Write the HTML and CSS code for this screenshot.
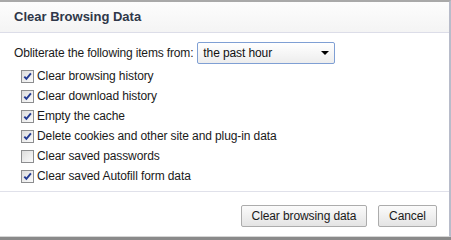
FILE: index.html
```html
<!DOCTYPE html>
<html lang="en">
<head>
<meta charset="utf-8">
<title>Clear Browsing Data</title>
<link rel="stylesheet" href="styles.css">
</head>
<body>
<div class="dialog">
  <div class="header">
    <h1 class="title">Clear Browsing Data</h1>
  </div>
  <div class="content">
    <div class="period-row">
      <span class="period-label">Obliterate the following items from:</span>
      <div class="select">
        <span class="select-value">the past hour</span>
        <span class="select-arrow"></span>
      </div>
    </div>
    <ul class="options">
      <li class="option"><span class="checkbox checked"><svg viewBox="0 0 11 11" width="11" height="11"><path d="M2.3 5.6 L4.4 7.9 L8.9 2.4" fill="none" stroke="#223a92" stroke-width="1.9"/></svg></span><span class="option-label">Clear browsing history</span></li>
      <li class="option"><span class="checkbox checked"><svg viewBox="0 0 11 11" width="11" height="11"><path d="M2.3 5.6 L4.4 7.9 L8.9 2.4" fill="none" stroke="#223a92" stroke-width="1.9"/></svg></span><span class="option-label">Clear download history</span></li>
      <li class="option"><span class="checkbox checked"><svg viewBox="0 0 11 11" width="11" height="11"><path d="M2.3 5.6 L4.4 7.9 L8.9 2.4" fill="none" stroke="#223a92" stroke-width="1.9"/></svg></span><span class="option-label">Empty the cache</span></li>
      <li class="option"><span class="checkbox checked"><svg viewBox="0 0 11 11" width="11" height="11"><path d="M2.3 5.6 L4.4 7.9 L8.9 2.4" fill="none" stroke="#223a92" stroke-width="1.9"/></svg></span><span class="option-label">Delete cookies and other site and plug-in data</span></li>
      <li class="option"><span class="checkbox"></span><span class="option-label">Clear saved passwords</span></li>
      <li class="option"><span class="checkbox checked"><svg viewBox="0 0 11 11" width="11" height="11"><path d="M2.3 5.6 L4.4 7.9 L8.9 2.4" fill="none" stroke="#223a92" stroke-width="1.9"/></svg></span><span class="option-label">Clear saved Autofill form data</span></li>
    </ul>
  </div>
  <div class="footer">
    <button class="btn btn-primary">Clear browsing data</button>
    <button class="btn btn-cancel">Cancel</button>
  </div>
</div>
</body>
</html>
```

FILE: styles.css
```css
html, body {
  margin: 0;
  padding: 0;
}
body {
  width: 451px;
  height: 240px;
  background: #8a8a8a;
  overflow: hidden;
  font-family: "Liberation Sans", Arial, sans-serif;
  font-size: 12px;
  color: #1a1a1a;
}
.dialog {
  box-sizing: border-box;
  width: 451px;
  height: 237px;
  background: #ffffff;
  border-top: 2px solid #a9a9a9;
  border-right: 2px solid #b8bcca;
  border-bottom: 1px solid #d6d6d6;
  display: flex;
  flex-direction: column;
}
.header {
  height: 30px;
  background: linear-gradient(#fdfdfd, #f4f4f4);
  border-bottom: 1px solid #dcdde8;
  padding-left: 14px;
  display: flex;
  align-items: center;
}
.title {
  margin: 0;
  font-size: 13px;
  font-weight: bold;
  color: #2f3749;
  line-height: 30px;
}
.content {
  padding: 9px 0 5px 14px;
}
.period-row {
  display: flex;
  align-items: center;
  height: 22px;
  letter-spacing: -0.15px;
}
.period-label {
  margin-right: 4px;
}
.select {
  box-sizing: border-box;
  width: 138px;
  height: 22px;
  border: 1px solid #7f9fd4;
  border-radius: 2px;
  background: linear-gradient(#ffffff, #ededed);
  display: flex;
  align-items: center;
  justify-content: space-between;
  padding: 0 4px 0 5px;
  letter-spacing: -0.1px;
}
.select-value {
  color: #111;
}
.select-arrow {
  width: 0;
  height: 0;
  border-left: 4px solid transparent;
  border-right: 4px solid transparent;
  border-top: 4px solid #000;
  margin-right: 1px;
}
.options {
  list-style: none;
  margin: 2px 0 0 0;
  padding: 0 0 0 7px;
}
.option {
  height: 20px;
  display: flex;
  align-items: center;
  letter-spacing: -0.1px;
}
.checkbox {
  box-sizing: border-box;
  width: 13px;
  height: 13px;
  border: 1px solid #8c8d8f;
  background: linear-gradient(135deg, #dcdcdc, #fbfbfb);
  margin-right: 3px;
  display: flex;
  align-items: center;
  justify-content: center;
}
.checkbox svg {
  display: block;
}
.footer {
  border-top: 1px solid #e0e1ea;
  padding: 13px 12px 9px 0;
  display: flex;
  justify-content: flex-end;
  gap: 11px;
}
.btn {
  box-sizing: border-box;
  height: 22px;
  margin: 0;
  padding: 0 9px;
  border: 1px solid #acacac;
  border-radius: 2px;
  background: linear-gradient(#fbfbfb, #e4e4e4);
  font-family: "Liberation Sans", Arial, sans-serif;
  font-size: 12px;
  letter-spacing: -0.1px;
  color: #1a1a1a;
}
.btn-primary {
  width: 126px;
}
.btn-cancel {
  width: 59px;
}
```
